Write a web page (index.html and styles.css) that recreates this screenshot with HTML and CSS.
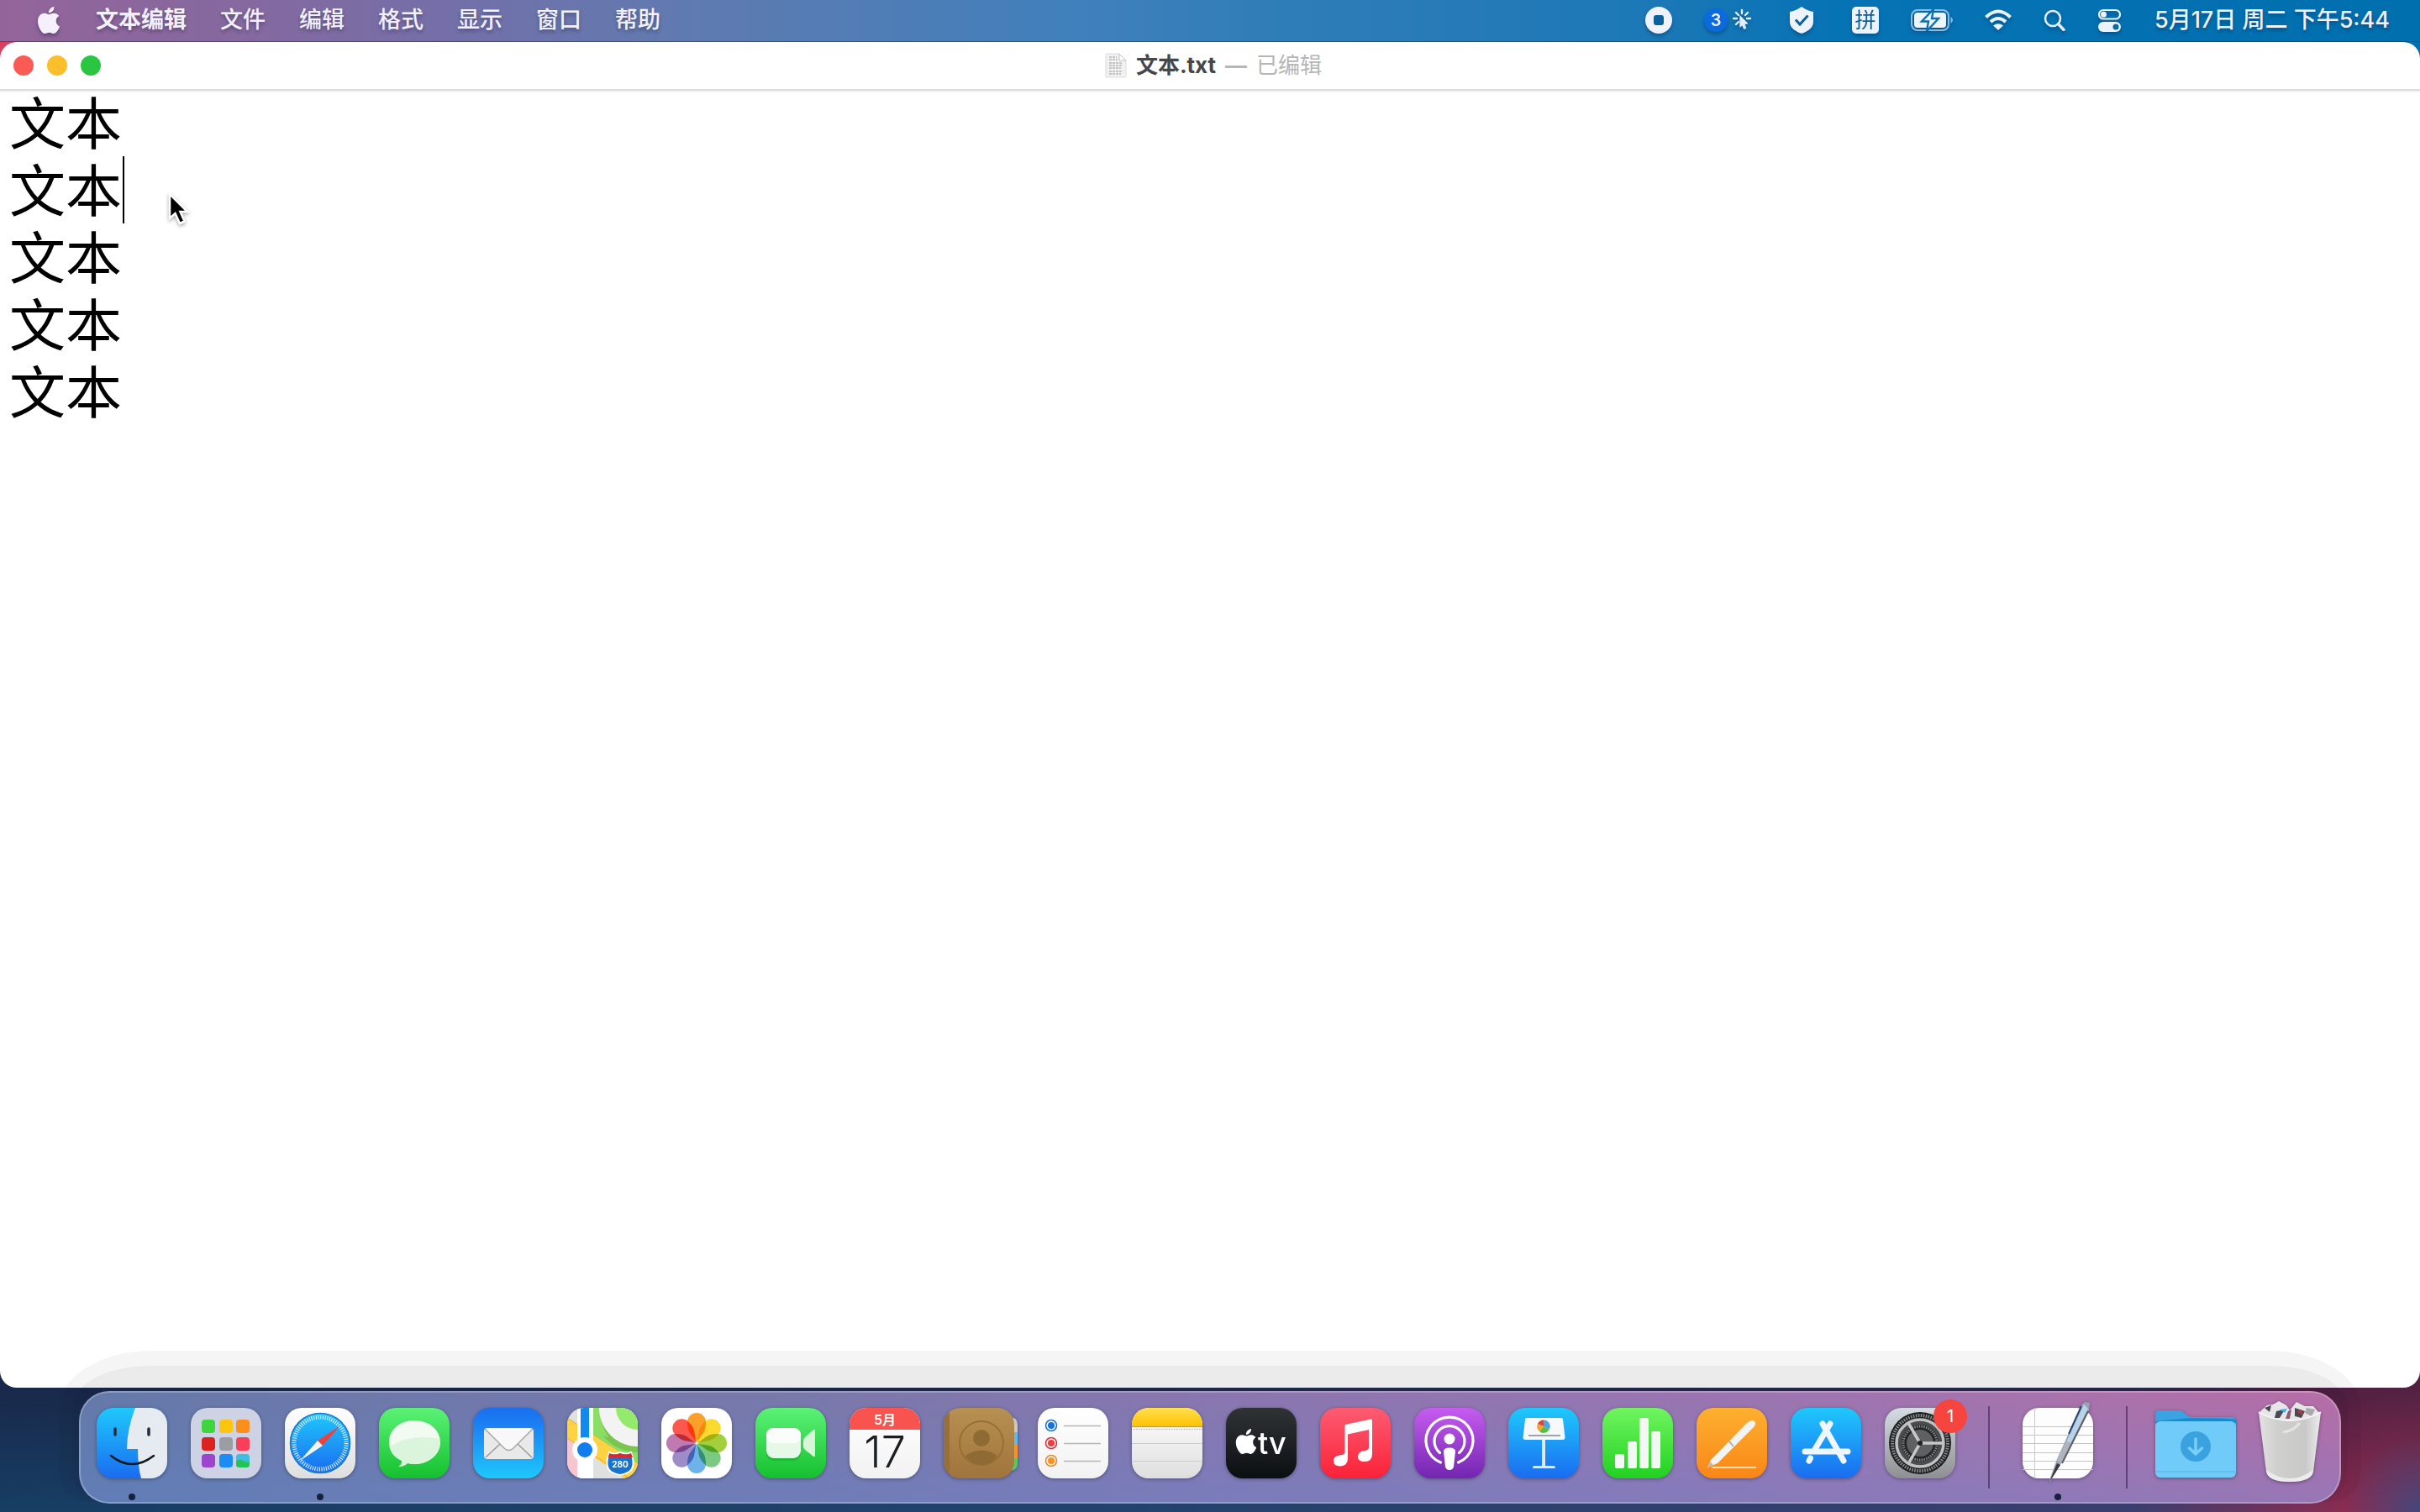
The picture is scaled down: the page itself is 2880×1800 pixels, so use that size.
FILE: index.html
```html
<!DOCTYPE html>
<html lang="zh-CN">
<head>
<meta charset="utf-8">
<title>文本.txt</title>
<link rel="stylesheet" href="styles.css">
</head>
<body>
<svg class="defs" width="0" height="0" aria-hidden="true">
  <defs>
    <linearGradient id="g-blue" x1="0" y1="0" x2="0" y2="1"><stop offset="0" stop-color="#1fc8fc"/><stop offset="1" stop-color="#1a6cf0"/></linearGradient>
    <linearGradient id="g-blue-up" x1="0" y1="0" x2="0" y2="1"><stop offset="0" stop-color="#1a6ff0"/><stop offset=".2" stop-color="#1c7cf2"/><stop offset="1" stop-color="#1fc8fc"/></linearGradient>
    <linearGradient id="g-green" x1="0" y1="0" x2="0" y2="1"><stop offset="0" stop-color="#5bf275"/><stop offset="1" stop-color="#15c02f"/></linearGradient>
    <linearGradient id="g-lime" x1="0" y1="0" x2="0" y2="1"><stop offset="0" stop-color="#70f560"/><stop offset="1" stop-color="#22d021"/></linearGradient>
    <linearGradient id="g-white" x1="0" y1="0" x2="0" y2="1"><stop offset="0" stop-color="#ffffff"/><stop offset="1" stop-color="#dedede"/></linearGradient>
    <linearGradient id="g-paper" x1="0" y1="0" x2="0" y2="1"><stop offset="0" stop-color="#ffffff"/><stop offset="1" stop-color="#f2f2f2"/></linearGradient>
    <linearGradient id="g-red" x1="0" y1="0" x2="0" y2="1"><stop offset="0" stop-color="#fc5c72"/><stop offset="1" stop-color="#fa2238"/></linearGradient>
    <linearGradient id="g-purple" x1="0" y1="0" x2="0" y2="1"><stop offset="0" stop-color="#c65cf0"/><stop offset="1" stop-color="#7226b0"/></linearGradient>
    <linearGradient id="g-orange" x1="0" y1="0" x2="0" y2="1"><stop offset="0" stop-color="#fdb030"/><stop offset="1" stop-color="#f98617"/></linearGradient>
    <linearGradient id="g-yellow" x1="0" y1="0" x2="0" y2="1"><stop offset="0" stop-color="#fee04e"/><stop offset="1" stop-color="#fdc203"/></linearGradient>
    <linearGradient id="g-black" x1="0" y1="0" x2="0" y2="1"><stop offset="0" stop-color="#2f3334"/><stop offset="1" stop-color="#0b0f12"/></linearGradient>
    <linearGradient id="g-brown" x1="0" y1="0" x2="0" y2="1"><stop offset="0" stop-color="#b89052"/><stop offset="1" stop-color="#a0743c"/></linearGradient>
    <linearGradient id="g-silver" x1="0" y1="0" x2="0" y2="1"><stop offset="0" stop-color="#d5dce4"/><stop offset="1" stop-color="#8e8f92"/></linearGradient>
    <linearGradient id="g-bin" x1="0" y1="0" x2="1" y2="0"><stop offset="0" stop-color="#e4e2e3"/><stop offset=".3" stop-color="#cfcfce"/><stop offset=".75" stop-color="#c9c9c9"/><stop offset="1" stop-color="#ececec"/></linearGradient>
    <clipPath id="tile"><rect width="84" height="84" rx="20"/></clipPath>
    <path id="apple" d="M12.152 6.896c-.948 0-2.415-1.078-3.96-1.04-2.04.027-3.91 1.183-4.961 3.014-2.117 3.675-.546 9.103 1.519 12.09 1.013 1.454 2.208 3.09 3.792 3.039 1.52-.065 2.09-.987 3.935-.987 1.831 0 2.35.987 3.96.948 1.637-.026 2.676-1.48 3.676-2.948 1.156-1.688 1.636-3.325 1.662-3.415-.039-.013-3.182-1.221-3.22-4.857-.026-3.04 2.48-4.494 2.597-4.559-1.429-2.09-3.623-2.324-4.39-2.376-2-.156-3.675 1.09-4.61 1.09zM15.53 3.83c.843-1.012 1.4-2.427 1.245-3.83-1.207.052-2.662.805-3.532 1.818-.78.896-1.454 2.338-1.273 3.714 1.338.104 2.715-.688 3.559-1.701z"/>
    <path id="petal" d="M0 -1L-8 -12Q-11 -16 -11 -25A11 11 0 0 1 11 -25Q11 -16 8 -12Z"/>
  </defs>
</svg>

<header class="menubar">
  <nav class="menus" aria-label="菜单栏">
    <button class="menu menu-apple" aria-label="Apple"><svg width="32" height="32" viewBox="0 0 24 24" fill="#f5f0fb"><use href="#apple"/></svg></button>
    <button class="menu menu-app">文本编辑</button>
    <button class="menu">文件</button>
    <button class="menu">编辑</button>
    <button class="menu">格式</button>
    <button class="menu">显示</button>
    <button class="menu">窗口</button>
    <button class="menu">帮助</button>
  </nav>
  <div class="status">
    <div class="status-icons">
      <button class="extra" aria-label="停止录制"><svg width="32" height="32" viewBox="0 0 32 32"><circle cx="16" cy="16" r="16" fill="#eef2fb"/><rect x="10" y="10" width="12" height="12" rx="3" fill="#0c609e"/></svg></button>
      <button class="extra extra-click" aria-label="点击">
        <span class="count">3</span>
        <svg width="24" height="28" viewBox="0 0 24 28" fill="none" stroke="#e4eefa" stroke-width="2.4" stroke-linecap="round"><path d="M11 2V6M4 5L7 8M18 5L15 8M1 12H5M17 12H21M4 19L7 16"/><path d="M9 9L18 18L14 18.500L16 23.500L13.500 24.500L11.500 20L9 22Z" fill="#e4eefa" stroke-width="0.8"/></svg>
      </button>
      <button class="extra extra-shield" aria-label="安全"><svg width="32" height="32" viewBox="0 0 32 32"><path d="M16 0Q23 5 30 6V18Q30 27 16 32Q2 27 2 18V6Q9 5 16 0Z" fill="#eef2fb"/><path d="M9 15.500L14 21L23.500 10.500" fill="none" stroke="#0c609e" stroke-width="3"/></svg></button>
      <button class="extra input-source">拼</button>
      <button class="extra" aria-label="电池"><svg width="50" height="26" viewBox="0 0 50 26"><rect x="1" y="1" width="44" height="24" rx="7" fill="none" stroke="#8fbbe0" stroke-width="2"/><rect x="4" y="4" width="38" height="18" rx="4" fill="#eef4fc"/><path d="M47.500 9Q50 11 50 13T47.500 17Z" fill="#8fbbe0"/><path d="M27 0L13 14.500H21L19 26L33 11H25Z" fill="#eef4fc" stroke="#0b6fb0" stroke-width="2.400"/></svg></button>
      <button class="extra" aria-label="无线局域网"><svg width="32" height="26" viewBox="-1 0 32 26" fill="none" stroke="#eaf3fc" stroke-width="4"><path d="M.500 9.500Q15 -4.500 29.500 9.500M6 15Q15 7 24 15"/><path d="M9 19.500Q15 15 21 19.500L15 25Z" fill="#eaf3fc" stroke="none"/></svg></button>
      <button class="extra" aria-label="聚焦搜索"><svg width="26" height="26" viewBox="0 0 26 26" fill="none" stroke="#e4eefa" stroke-width="2.600"><circle cx="11" cy="11" r="9"/><path d="M17.500 17.500L24 24.500" stroke-width="3.400" stroke-linecap="round"/></svg></button>
      <button class="extra" aria-label="控制中心"><svg width="30" height="28" viewBox="0 0 30 28"><rect x="2" y="2" width="25" height="10.500" rx="5.250" fill="none" stroke="#eaf2fb" stroke-width="2.200"/><circle cx="7.500" cy="7.250" r="3.500" fill="#eaf2fb"/><rect x="1" y="16" width="27" height="12" rx="6" fill="#eaf2fb"/><circle cx="22" cy="22" r="3.500" fill="#0c68a6"/></svg></button>
    </div>
    <button class="clock">5月17日 周二 下午5:44</button>
  </div>
</header>

<main class="window">
  <div class="titlebar">
    <div class="lights">
      <button class="light light-close" aria-label="关闭"></button>
      <button class="light light-min" aria-label="最小化"></button>
      <button class="light light-zoom" aria-label="缩放"></button>
    </div>
    <div class="title">
      <svg width="26" height="30" viewBox="0 0 26 30"><path d="M2 1H17L25 9V28Q25 29 24 29H2Q1 29 1 28V2Q1 1 2 1Z" fill="#f1f1f1" stroke="#dcdcdc"/><path d="M17 1V9H25Z" fill="#fff" stroke="#c4c4c4"/><path d="M5 5H14M5 8H15M5 12H21M5 15H20M5 18H19M5 22H20M5 25H19" stroke="#b4b4b4" stroke-width="1.500" stroke-dasharray="3 1"/></svg>
      <h1 class="name">文本.txt</h1>
      <span class="dash">—</span>
      <span class="edited">已编辑</span>
    </div>
  </div>
  <div class="editor">
    <textarea class="document" aria-label="文稿" spellcheck="false">文本
文本
文本
文本
文本</textarea>
    <span class="caret"></span>
    <svg class="pointer" width="30" height="42" viewBox="0 0 30 42"><path d="M3 2V31L9.500 25L15 37L20.500 34.500L15.500 23H24Z" fill="#000" stroke="#fff" stroke-width="2.500"/></svg>
  </div>
</main>

<footer class="dock-area">
  <nav class="dock" aria-label="程序坞">
    <button class="app running" aria-label="访达"><svg viewBox="0 0 84 84"><g clip-path="url(#tile)"><rect width="84" height="84" fill="url(#g-blue)"/><path d="M46 0Q36 26 36 49H49Q49 70 53 84H84V0Z" fill="#e6eaf1"/></g><path d="M22 25V32M62 25V32" stroke="#222c3a" stroke-width="3.500" stroke-linecap="round"/><path d="M17 57Q42 77 68 57" fill="none" stroke="#15181c" stroke-width="2.500" stroke-linecap="round"/></svg></button>
    <button class="app" aria-label="启动台"><svg viewBox="0 0 84 84"><rect width="84" height="84" rx="20" fill="#cdd3e5"/><rect x="13" y="14" width="16" height="16" rx="4" fill="#3ed53e"/><rect x="34" y="14" width="16" height="16" rx="4" fill="#fdc50e"/><rect x="54" y="14" width="16" height="16" rx="4" fill="#fb8f1c"/><rect x="13" y="35" width="16" height="16" rx="4" fill="#dc221f"/><rect x="34" y="35" width="16" height="16" rx="4" fill="#9b9da2"/><rect x="54" y="35" width="16" height="16" rx="4" fill="#fb3f58"/><rect x="13" y="55" width="16" height="16" rx="4" fill="#9d45cc"/><rect x="34" y="55" width="16" height="16" rx="4" fill="#1a8df5"/><rect x="54" y="55" width="16" height="16" rx="4" fill="#3fbce0"/><path d="M54 64Q58 60 62 63T70 64V67Q70 71 66 71H58Q54 71 54 67Z" fill="#22c255"/></svg></button>
    <button class="app running" aria-label="Safari 浏览器"><svg viewBox="0 0 84 84"><rect width="84" height="84" rx="20" fill="url(#g-white)"/><circle cx="42" cy="42" r="36" fill="url(#g-blue)"/><circle cx="42" cy="42" r="35.500" fill="none" stroke="#1a7ccb" stroke-width="1.500"/><circle cx="42" cy="42" r="31" fill="none" stroke="#dcefff" stroke-width="5" stroke-dasharray="1.100 1.605"/><path d="M66 21L39 39L45 45Z" fill="#f0403c"/><path d="M18 63L39 39L45 45Z" fill="#f4f4f4"/></svg></button>
    <button class="app" aria-label="信息"><svg viewBox="0 0 84 84"><rect width="84" height="84" rx="20" fill="url(#g-green)"/><path d="M42 15C59 15 73 26 73 41S59 67 42 67Q38 67 34 66Q30 70 23 70Q28 67 27 63Q12 56 12 41C12 26 25 15 42 15Z" fill="#f2fbf1"/><path d="M13 46Q40 30 72 37C74 53 61 67 42 67Q38 67 34 66Q30 70 23 70Q28 67 27 63Q14 57 13 46Z" fill="#c9f0cb" opacity=".55"/></svg></button>
    <button class="app" aria-label="邮件"><svg viewBox="0 0 84 84"><rect width="84" height="84" rx="20" fill="url(#g-blue-up)"/><rect x="13" y="24" width="59" height="37" rx="4" fill="#e9e9e9"/><path d="M15 59L32 43M70 59L53 43" stroke="#9a9a9a" stroke-width="1.500"/><path d="M14 25L37 48Q42.500 53 48 48L71 25" fill="#f8f8f8" stroke="#a8a8a8" stroke-width="1.500"/></svg></button>
    <button class="app" aria-label="地图"><svg viewBox="0 0 84 84"><g clip-path="url(#tile)"><rect width="84" height="84" fill="#dfe0e0"/><path d="M0 36L14 44V84H0Z" fill="#f8c5ce"/><path d="M0 12L84 66V84H68L0 36Z" fill="#fdd243"/><path d="M0 12L84 66M0 36L74 84" stroke="#f0a828" fill="none"/><path d="M30 0H84V66L31 32Z" fill="#8ade64"/><circle cx="84" cy="0" r="53" fill="#7bc452"/><path d="M31 0H40V10Q42 26 50 36L31 28Z" fill="#8ade64"/><circle cx="84" cy="0" r="46" fill="#f3f3f3"/><circle cx="84" cy="0" r="26" fill="#94ea6a"/><rect x="12" width="19" height="84" fill="#fff"/><rect x="16" width="10" height="44" fill="#118af0"/><circle cx="21" cy="50" r="15" fill="#fff"/><circle cx="21" cy="50" r="9" fill="#0f7df0"/></g><path d="M50 53Q56 56 63 53Q70 56 76 53Q82 70 74 76Q69 79 63 80Q57 79 52 76Q44 70 50 53Z" fill="#1673cf" stroke="#fff" stroke-width="2"/><path d="M49 59L50 54Q56 57 63 54Q70 57 76 54L78 59Z" fill="#dc2730"/><text x="63" y="71" class="shield-text">280</text></svg></button>
    <button class="app" aria-label="照片"><svg viewBox="0 0 84 84"><rect width="84" height="84" rx="20" fill="#fff"/><g class="petals" transform="translate(42 42)"><use href="#petal" fill="#fd9f2b"/><use href="#petal" fill="#fbd92f" transform="rotate(45)"/><use href="#petal" fill="#a4cf3c" transform="rotate(90)"/><use href="#petal" fill="#7cc983" transform="rotate(135)"/><use href="#petal" fill="#6db3ea" transform="rotate(180)"/><use href="#petal" fill="#9d8cc8" transform="rotate(225)"/><use href="#petal" fill="#c07ab2" transform="rotate(270)"/><use href="#petal" fill="#fb5950" transform="rotate(315)"/></g></svg></button>
    <button class="app" aria-label="FaceTime 通话"><svg viewBox="0 0 84 84"><rect width="84" height="84" rx="20" fill="url(#g-green)"/><rect x="13" y="25" width="41" height="38" rx="9" fill="#14a42a" opacity=".5"/><rect x="13" y="24" width="41" height="36" rx="9" fill="#e6f8e7"/><rect x="13" y="24" width="41" height="18" rx="8" fill="#fafdfa"/><path d="M57 39Q57 37 59 35L68 27Q71 24 71 28V56Q71 60 68 57L59 50Q57 48 57 46Z" fill="#d6f5d9"/></svg></button>
    <button class="app" aria-label="日历"><svg viewBox="0 0 84 84"><rect width="84" height="84" rx="20" fill="url(#g-paper)"/><path d="M0 26V20A20 20 0 0 1 20 0H64A20 20 0 0 1 84 20V26Z" fill="#f9534f"/><text x="42" y="20" class="cal-month">5月</text><text x="42" y="71" class="cal-day">17</text></svg></button>
    <button class="app" aria-label="通讯录"><svg viewBox="0 0 84 84"><path d="M80 11Q88 12 88 20V29H80Z" fill="#c8c8cc"/><path d="M80 29H88V44H80Z" fill="#5cbcf2"/><path d="M80 44H88V60H80Z" fill="#fb9120"/><path d="M80 60H88V66Q88 74 80 75Z" fill="#4fcf5a"/><rect width="84" height="84" rx="20" fill="url(#g-brown)"/><path d="M7 5V79Q0 74 0 64V20Q0 10 7 5Z" fill="#95703b"/><circle cx="45" cy="42" r="26" fill="none" stroke="#966f38" stroke-width="2"/><circle cx="45" cy="36" r="10" fill="#8f6a35"/><path d="M26 57Q45 44 64 57Q57 68 45 68T26 57Z" fill="#8f6a35"/></svg></button>
    <button class="app" aria-label="提醒事项"><svg viewBox="0 0 84 84"><rect width="84" height="84" rx="20" fill="url(#g-paper)"/><g fill="none" stroke-width="1.500"><circle cx="16" cy="21" r="6.500" stroke="#1273dd"/><circle cx="16" cy="42" r="6.500" stroke="#d8303c"/><circle cx="16" cy="63" r="6.500" stroke="#e08a28"/></g><circle cx="16" cy="21" r="4" fill="#1273dd"/><circle cx="16" cy="42" r="4" fill="#f03c3c"/><circle cx="16" cy="63" r="4" fill="#fb9020"/><path d="M31 21.500H75M31 42.500H75M31 63.500H75" stroke="#b5b5ba" stroke-width="1.500"/></svg></button>
    <button class="app" aria-label="备忘录"><svg viewBox="0 0 84 84"><rect width="84" height="84" rx="20" fill="url(#g-white)"/><path d="M0 22V20A20 20 0 0 1 20 0H64A20 20 0 0 1 84 20V22Z" fill="url(#g-yellow)"/><path d="M0 22.500H84" stroke="#b79c58"/><path d="M2 25.500H84" stroke="#b5b5b5" stroke-dasharray="1.500 1.500"/><path d="M0 42.500H84M0 63.500H84" stroke="#cbcbcb"/></svg></button>
    <button class="app" aria-label="视频"><svg viewBox="0 0 84 84"><rect width="84" height="84" rx="20" fill="url(#g-black)"/><use href="#apple" fill="#fff" transform="translate(9 25) scale(1.250)"/><text x="38" y="55" class="tv-text">tv</text></svg></button>
    <button class="app" aria-label="音乐"><svg viewBox="0 0 84 84"><rect width="84" height="84" rx="20" fill="url(#g-red)"/><path d="M30 20L60 13.500Q62 13 62 15.500V55Q62 64 53 64Q45 64 45 58Q45 52 53 51Q58 50.500 58 47V26L33 31.500V60Q33 69 24 69.500Q16 69.500 16 63Q16 57.500 23 56.500Q29.500 56 29.500 53V21Z" fill="#fff"/></svg></button>
    <button class="app" aria-label="播客"><svg viewBox="0 0 84 84"><rect width="84" height="84" rx="20" fill="url(#g-purple)"/><g fill="none" stroke="#fff" stroke-width="3.200" stroke-linecap="round"><path d="M31.500 65A28 28 0 1 1 52.500 65"/><path d="M30.500 53.500A18 18 0 1 1 53.500 53.500"/></g><circle cx="42" cy="37" r="6.500" fill="#fff"/><path d="M35 52Q35 47.500 42 47.500T49 52L47 70Q46 74 42 74T37 70Z" fill="#fff"/></svg></button>
    <button class="app" aria-label="Keynote 讲演"><svg viewBox="0 0 84 84"><rect width="84" height="84" rx="20" fill="url(#g-blue)"/><path d="M40 38H44V69H54Q56 69 56 72H29Q29 69 31 69H40Z" fill="#e4e9f0"/><path d="M22 12H63Q65 12 65 14L67.500 35Q67.500 38 65 38H20Q17.500 38 17.500 35L20 14Q20 12 22 12Z" fill="#f7f8f9"/><path d="M24 33H62" stroke="#9aa4b2" stroke-width="2"/><path d="M42 22V14.500A7.500 7.500 0 0 1 48.500 26Z" fill="#45a8e4"/><path d="M42 22L48.500 26A7.500 7.500 0 0 1 37 28Z" fill="#56c03e"/><path d="M42 22L37 28A7.500 7.500 0 0 1 35 19Z" fill="#f7a52d"/><path d="M42 22L35 19A7.500 7.500 0 0 1 42 14.500Z" fill="#d8463c"/></svg></button>
    <button class="app" aria-label="Numbers 表格"><svg viewBox="0 0 84 84"><rect width="84" height="84" rx="20" fill="url(#g-lime)"/><g fill="#f4f8f4"><rect x="15" y="55" width="11" height="17" rx="2"/><rect x="30" y="40" width="11" height="32" rx="2"/><rect x="44" y="12" width="11" height="60" rx="2"/><rect x="58" y="28" width="11" height="44" rx="2"/></g></svg></button>
    <button class="app" aria-label="Pages 文稿"><svg viewBox="0 0 84 84"><rect width="84" height="84" rx="20" fill="url(#g-orange)"/><path d="M18 71H71" stroke="#fcd9a8" stroke-width="2"/><path d="M13 71L17 62L59 19Q66 13 69 16T67 24L25 66Z" fill="#f5f3f1"/><path d="M39 40L44 46" stroke="#a8a29c" stroke-width="1.500"/><path d="M13 71L16 64L20 68Z" fill="#c6b8a8"/></svg></button>
    <button class="app" aria-label="App Store"><svg viewBox="0 0 84 84"><rect width="84" height="84" rx="20" fill="url(#g-blue)"/><g stroke="#eef6ff" stroke-width="7" stroke-linecap="round"><path d="M17 52H68"/><path d="M47 19L28.500 50M23.500 60L22 63"/><path d="M38 19L63 63"/></g></svg></button>
    <button class="app" aria-label="系统偏好设置，1 个提醒"><svg viewBox="0 0 84 84"><rect width="84" height="84" rx="20" fill="url(#g-silver)"/><circle cx="42" cy="42" r="37" fill="#1d1f20"/><circle cx="42" cy="42" r="33" fill="none" stroke="#8a8c8e" stroke-width="4" stroke-dasharray="1.600 1.400"/><circle cx="42" cy="42" r="28" fill="#4a4c4d" stroke="#bfc1c3" stroke-width="3.500"/><circle cx="42" cy="42" r="19" fill="#5e6062" stroke="#232526" stroke-width="6"/><circle cx="42" cy="42" r="20" fill="none" stroke="#85878a" stroke-width="3" stroke-dasharray="1.500 1.300"/><path d="M42 42H69M42 42L28 18M42 42L29 65" stroke="#c6c8ca" stroke-width="3.500"/><circle cx="42" cy="42" r="3" fill="#222"/></svg><span class="badge">1</span></button>
    <span class="separator"></span>
    <button class="app running" aria-label="文本编辑"><svg viewBox="0 0 84 84"><rect width="84" height="84" rx="20" fill="#fdfdfd"/><path d="M0 22.500H84M0 32.500H84M0 42.500H84M0 53.500H84M0 63.500H84M0 73.500H84" stroke="#c4c4c4"/><path d="M14.500 0V84" stroke="#cfcbc2"/><path d="M74 -7L80 -6L79 3L46 66L33 88L32 86L41 61L70 -3Z" fill="#98a4b1"/><path d="M73 -4L42 62L46 65L78 1Z" fill="#b9d4e8"/><path d="M70 -2L55 31" stroke="#26496d" stroke-width="2"/><path d="M52 39L41 62L47 65L59 43Z" fill="#adb4be"/><path d="M41 66L32 88L45 68Z" fill="#3c3444"/><path d="M78 4L47 66" stroke="#5d5b68" stroke-width="2"/></svg></button>
    <span class="separator"></span>
    <button class="app" aria-label="下载"><svg viewBox="0 0 84 84"><path d="M-6 8Q-6 3 -1 3H22Q26 3 28 6L33 10Q35 11 38 11H85Q90 11 90 16V40H-6Z" fill="#3aa3e2"/><path d="M-6 18H90V14Q80 12 36 12L-6 16Z" fill="#148bd6"/><rect x="-6" y="16" width="96" height="67" rx="6" fill="#70cbf9"/><path d="M-6 76H90" stroke="#5ab4e4"/><circle cx="42" cy="46" r="18" fill="#3ba2e0"/><path d="M42 37V54M34.500 48L42 55L49.500 48" fill="none" stroke="#79cffa" stroke-width="3.500" stroke-linecap="round" stroke-linejoin="round"/></svg></button>
    <button class="app" aria-label="废纸篓"><svg viewBox="0 0 84 84"><path d="M7 4L15 -3L22 -4L29 -8L38 -3L42 3L50 -7L60 -2L70 -2L77 6L72 14H12Z" fill="#e6e6e8"/><path d="M12 0L20 -3L18 5ZM26 4L36 2L30 12H24ZM48 0L60 4L56 12L48 10Z" fill="#4a4a56"/><path d="M30 2L39 1L36 6Z" fill="#3fb2e8"/><path d="M50 4L56 2L58 9Z" fill="#b03a48"/><path d="M40 4L44 2L42 13H37Z" fill="#8a5a78"/><path d="M62 0L72 2L68 10L60 6Z" fill="#a8a8ae"/><path d="M5 5Q22 14 42 14T79 5L70 76Q68 88 42 88T14 76Z" fill="url(#g-bin)"/><path d="M5 5Q22 15 42 15T79 5" fill="none" stroke="#f6f6f6" stroke-width="2"/><path d="M14 74Q28 84 42 84T70 74Q69 88 42 88T14 74Z" fill="#ececec"/><path d="M34 29Q46 28 54 18" fill="none" stroke="#e4e4e4" stroke-width="3"/></svg></button>
  </nav>
</footer>
</body>
</html>
```
FILE: styles.css
```css
* {
  box-sizing: border-box;
}

body {
  margin: 0;
  min-height: 100vh;
  display: flex;
  flex-direction: column;
  overflow: hidden;
  font-family: Inter, "Noto Sans CJK SC", sans-serif;
  font-size: 27px;
  background:
    linear-gradient(to right, #d8405e 0, #d8405e 580px, #1a5f98 581px, #0070b0 100%) top / 100% 50% no-repeat,
    radial-gradient(circle at 100% 100%, #43467a 0, rgba(67, 70, 122, 0) 90px),
    linear-gradient(to bottom, rgba(26, 20, 50, 0.6) 0, rgba(26, 20, 50, 0) 100%) bottom / 100% 172px no-repeat,
    linear-gradient(to right, #173e64 0, #22436e 45%, #34406f 75%, #3a3f70 88%, #8c2c52 97%, #903054 100%);
}

button {
  margin: 0;
  padding: 0;
  border: 0;
  background: none;
  color: inherit;
  font: inherit;
}

.defs {
  position: absolute;
}

.menubar {
  height: 50px;
  padding: 0 36px 1px 42px;
  display: flex;
  justify-content: space-between;
  align-items: center;
  color: #f2f0fa;
  background: linear-gradient(to right, #93649a 0, #85699f 10%, #756fa8 18%, #607ab0 28%, #3f80bc 45%, #2f7db8 53%, #1c78b6 68%, #0673b5 76%, #006fae 100%);
  border-bottom: 1px solid rgba(30, 30, 70, 0.5);
}

.menus,
.status,
.status-icons {
  display: flex;
  align-items: center;
}

.menus {
  gap: 40px;
}

.menu,
.clock {
  line-height: 48px;
  white-space: nowrap;
  text-shadow: 0 3px 4px rgba(0, 0, 40, 0.3);
  font-weight: 500;
}

.menu-apple {
  width: 32px;
  height: 44px;
  display: flex;
  align-items: center;
  filter: drop-shadow(0 3px 2px rgba(0, 0, 40, 0.3));
}

.menu-app {
  font-weight: 700;
}

.status {
  gap: 32px;
}

.status-icons {
  gap: 38px;
}

.extra {
  display: flex;
  align-items: center;
  filter: drop-shadow(0 3px 2px rgba(0, 20, 60, 0.3));
}

.extra-click {
  gap: 6px;
  width: 62px;
}

.extra-shield {
  width: 38px;
}

.count {
  width: 28px;
  height: 28px;
  border-radius: 50%;
  background: #0a6be0;
  font-size: 20px;
  font-weight: 600;
  line-height: 28px;
  text-align: center;
}

.input-source {
  width: 32px;
  height: 32px;
  justify-content: center;
  border-radius: 5px;
  background: #eef2fb;
  color: #0c5f9d;
  font-size: 25px;
  line-height: 32px;
}

.clock {
  width: 286px;
  text-align: right;
}

.window {
  flex: 1;
  display: flex;
  flex-direction: column;
  border-radius: 20px;
  background: #fff;
  overflow: hidden;
}

.titlebar {
  display: grid;
  grid-template-columns: 1fr auto 1fr;
  align-items: center;
  height: 58px;
  padding: 0 16px;
  border-bottom: 2px solid #dcdcdc;
  box-shadow: 0 2px 0 #f4f4f4;
}

.lights {
  display: flex;
  gap: 16px;
}

.light {
  width: 24px;
  height: 24px;
  border-radius: 50%;
}

.light-close {
  background: #fb5b55;
}

.light-min {
  background: #fbbf2b;
}

.light-zoom {
  background: #2bc641;
}

.title {
  display: flex;
  align-items: center;
  gap: 11px;
  padding-left: 8px;
  line-height: 56px;
  font-size: 26px;
  color: #b6b6b6;
}

.name {
  margin: 0;
  font-size: 26px;
  font-weight: 700;
  color: #474747;
}

.dash {
  font-weight: 700;
}

.editor {
  position: relative;
  flex: 1;
  display: flex;
}

.document {
  flex: 1;
  display: block;
  padding: 0 11px;
  border: 0;
  outline: 0;
  resize: none;
  overflow: hidden;
  background: transparent;
  color: #000;
  font-family: Inter, "Noto Sans CJK SC", sans-serif;
  font-size: 67px;
  font-weight: 400;
  line-height: 80px;
}

.caret {
  position: absolute;
  left: 146px;
  top: 78px;
  width: 2px;
  height: 80px;
  background: #000;
}

.pointer {
  position: absolute;
  left: 199px;
  top: 121px;
  filter: drop-shadow(0 2px 2px rgba(0, 0, 0, 0.35));
}

.dock-area {
  position: relative;
  z-index: 0;
  display: flex;
  justify-content: center;
  padding: 4px 0 10px;
}

.dock {
  position: relative;
  display: flex;
  height: 134px;
  padding: 0 3px 0 5px;
  border: 2px solid rgba(255, 255, 255, 0.25);
  border-radius: 36px;
  background:
    linear-gradient(to bottom, rgba(90, 135, 210, 0), rgba(90, 135, 210, 0.35)) border-box,
    linear-gradient(to right, #6479a8 0, #7078aa 15%, #7a78aa 32%, #8876ae 48%, #9775b0 68%, #a673ac 85%, #b86da6 100%) border-box;
}

/* Two flat steps of the shade that the dock casts on the window above it. */
.dock::before,
.dock::after {
  content: "";
  position: absolute;
  z-index: -1;
  background: rgba(0, 0, 0, 0.04);
}

.dock::before {
  inset: -50px -26px 0;
  border-radius: 110px 110px 36px 36px / 70px 70px 36px 36px;
}

.dock::after {
  inset: -32px -10px 0;
  border-radius: 90px 90px 36px 36px / 50px 50px 36px 36px;
}

.app {
  position: relative;
  width: 112px;
  padding: 18px 14px 28px;
}

.app svg {
  display: block;
  width: 84px;
  height: 84px;
  overflow: visible;
  filter: drop-shadow(0 1px 2px rgba(0, 0, 0, 0.35));
}

.running::after {
  content: "";
  position: absolute;
  left: 52px;
  bottom: 2px;
  width: 8px;
  height: 8px;
  border-radius: 50%;
  background: #14203c;
}

.separator {
  width: 2px;
  height: 98px;
  margin: 16px 25px;
  background: rgba(60, 30, 80, 0.6);
}

.badge {
  position: absolute;
  left: 72px;
  top: 8px;
  width: 40px;
  height: 40px;
  border-radius: 50%;
  background: #f6443e;
  color: #fff;
  font-size: 20px;
  line-height: 40px;
  text-align: center;
}

.petals use {
  mix-blend-mode: multiply;
}

.shield-text {
  font-size: 10px;
  font-weight: 700;
  text-anchor: middle;
  fill: #fff;
}

.cal-month {
  font-size: 16px;
  font-weight: 600;
  text-anchor: middle;
  fill: #fff;
}

.cal-day {
  font-size: 52px;
  font-weight: 300;
  text-anchor: middle;
  fill: #1c1f22;
}

.tv-text {
  font-size: 36px;
  font-weight: 500;
  fill: #fff;
}
```
